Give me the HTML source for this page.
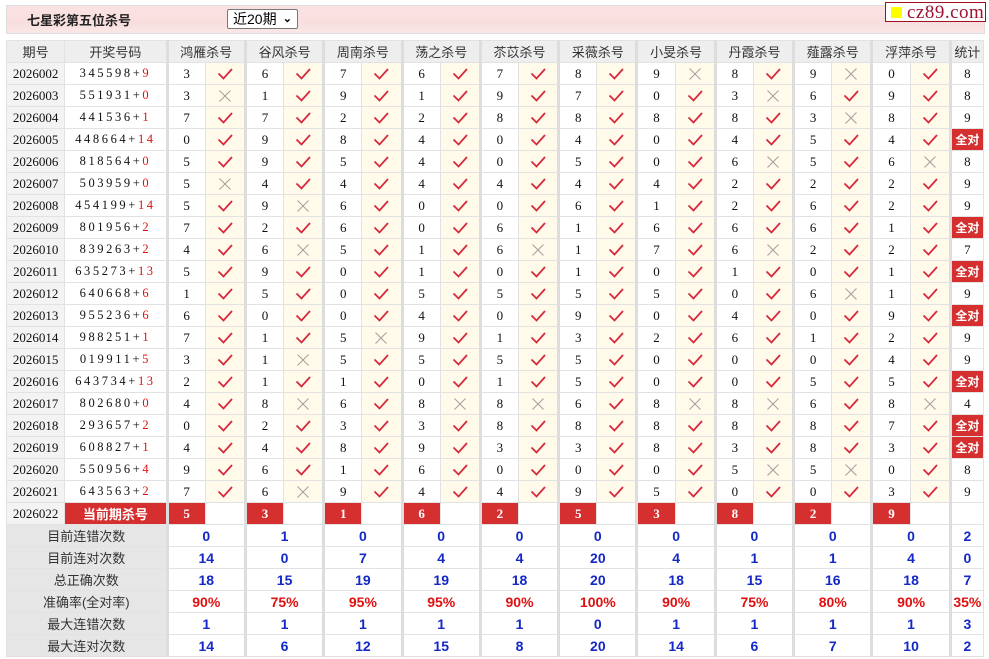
<!DOCTYPE html>
<html><head><meta charset="utf-8">
<style>
body{margin:0;background:#fff;width:989px;height:659px;overflow:hidden;position:relative;font-family:"Liberation Sans","Noto Sans CJK SC",sans-serif}
.top{position:absolute;left:6px;top:5px;width:977px;height:27px;border:1px solid #ddd;background:linear-gradient(#fbe3e3,#f9dede 60%,#fae6e6)}
.top b{position:absolute;left:20px;top:4px;font-size:13px;color:#222}
.sel{position:absolute;left:220px;top:3px;width:71px;height:20px;border:1px solid #777;background:#fff;font-size:14px;line-height:19px;padding-left:5px;box-sizing:border-box;border-radius:2px}
.sel span{position:absolute;right:5px;top:0;font-size:11px;font-weight:bold}
.logo{position:absolute;left:885px;top:2px;width:101px;height:20px;border:1px solid #a01020;background:#fff;font-family:"Liberation Serif",serif;font-size:19px;color:#a01030;line-height:20px;box-sizing:border-box;padding-left:21px;letter-spacing:.5px}
.logo i{position:absolute;left:5px;top:4px;width:11px;height:11px;background:#ffff00}
table{position:absolute;left:6px;top:40px;border-collapse:collapse;table-layout:fixed;width:978px}
td{border:1px solid #e2e2e2;height:21px;padding:0;text-align:center;font-family:"Liberation Serif","Noto Serif CJK SC",serif;font-size:13px;color:#111;overflow:hidden;white-space:nowrap}
tr.h td{background:#eee;font-family:"Liberation Sans","Noto Sans CJK SC",sans-serif;font-size:13px;color:#333}
td.p{background:#f3f3f3;font-size:13px}
td.n{letter-spacing:2.6px;font-size:12.5px}
td.n em{font-style:normal;color:#e01010}
td.g{border-left:3px solid #ddd}
td.c{background:#fffaea}
td.c svg{display:block;margin:0 auto}
td.r{background:#d52f30;color:#fff;font-weight:bold;font-family:"Liberation Sans","Noto Sans CJK SC",sans-serif}
td.rs{background:#d52f30;color:#fff;font-weight:bold}
td.a{background:#d52f30;color:#fff;font-weight:bold;font-family:"Liberation Sans","Noto Sans CJK SC",sans-serif;font-size:12px}
td.l{background:#e6e6e6;font-family:"Liberation Sans","Noto Sans CJK SC",sans-serif;color:#333}
tr.s td{font-family:"Liberation Sans",sans-serif;font-weight:bold;color:#1428c8;font-size:14px}
tr.s td.l{font-weight:normal;color:#333;font-size:13px;font-family:"Liberation Sans","Noto Sans CJK SC",sans-serif}
tr.s.pc td{color:#e01010}
tr.s.pc td.l{color:#333}
</style></head><body>
<svg width="0" height="0" style="position:absolute"><defs>
<symbol id="y" viewBox="0 0 18 14"><path d="M2.5 6.5 L7.5 11.5 L16 2" fill="none" stroke="#d8283c" stroke-width="1.8"/></symbol>
<symbol id="x" viewBox="0 0 18 14"><path d="M3.5 1.5 L14.5 12.5 M14.5 1.5 L3.5 12.5" fill="none" stroke="#a0a0a0" stroke-width="1"/></symbol>
</defs></svg>
<div class="top"><b>七星彩第五位杀号</b><div class="sel">近20期<span>&#8964;</span></div></div>
<div class="logo"><i></i>cz89.com</div>
<table>
<colgroup><col style="width:58px"><col style="width:102px">
<col style="width:38px"><col style="width:40px"><col style="width:38px"><col style="width:40px"><col style="width:38px"><col style="width:40px"><col style="width:38px"><col style="width:40px"><col style="width:38px"><col style="width:40px"><col style="width:38px"><col style="width:40px"><col style="width:38px"><col style="width:40px"><col style="width:38px"><col style="width:40px"><col style="width:38px"><col style="width:40px"><col style="width:38px"><col style="width:40px">
<col style="width:33px"></colgroup>
<tr class="h"><td>期号</td><td>开奖号码</td><td class="g" colspan="2">鸿雁杀号</td><td class="g" colspan="2">谷风杀号</td><td class="g" colspan="2">周南杀号</td><td class="g" colspan="2">荡之杀号</td><td class="g" colspan="2">苶苡杀号</td><td class="g" colspan="2">采薇杀号</td><td class="g" colspan="2">小旻杀号</td><td class="g" colspan="2">丹霞杀号</td><td class="g" colspan="2">薤露杀号</td><td class="g" colspan="2">浮萍杀号</td><td class="g">统计</td></tr>
<tr><td class="p">2026002</td><td class="n">345598+<em>9</em></td><td class="g">3</td><td class="c"><svg width="18" height="14"><use href="#y"/></svg></td><td class="g">6</td><td class="c"><svg width="18" height="14"><use href="#y"/></svg></td><td class="g">7</td><td class="c"><svg width="18" height="14"><use href="#y"/></svg></td><td class="g">6</td><td class="c"><svg width="18" height="14"><use href="#y"/></svg></td><td class="g">7</td><td class="c"><svg width="18" height="14"><use href="#y"/></svg></td><td class="g">8</td><td class="c"><svg width="18" height="14"><use href="#y"/></svg></td><td class="g">9</td><td class="c"><svg width="18" height="14"><use href="#x"/></svg></td><td class="g">8</td><td class="c"><svg width="18" height="14"><use href="#y"/></svg></td><td class="g">9</td><td class="c"><svg width="18" height="14"><use href="#x"/></svg></td><td class="g">0</td><td class="c"><svg width="18" height="14"><use href="#y"/></svg></td><td class="g">8</td></tr>
<tr><td class="p">2026003</td><td class="n">551931+<em>0</em></td><td class="g">3</td><td class="c"><svg width="18" height="14"><use href="#x"/></svg></td><td class="g">1</td><td class="c"><svg width="18" height="14"><use href="#y"/></svg></td><td class="g">9</td><td class="c"><svg width="18" height="14"><use href="#y"/></svg></td><td class="g">1</td><td class="c"><svg width="18" height="14"><use href="#y"/></svg></td><td class="g">9</td><td class="c"><svg width="18" height="14"><use href="#y"/></svg></td><td class="g">7</td><td class="c"><svg width="18" height="14"><use href="#y"/></svg></td><td class="g">0</td><td class="c"><svg width="18" height="14"><use href="#y"/></svg></td><td class="g">3</td><td class="c"><svg width="18" height="14"><use href="#x"/></svg></td><td class="g">6</td><td class="c"><svg width="18" height="14"><use href="#y"/></svg></td><td class="g">9</td><td class="c"><svg width="18" height="14"><use href="#y"/></svg></td><td class="g">8</td></tr>
<tr><td class="p">2026004</td><td class="n">441536+<em>1</em></td><td class="g">7</td><td class="c"><svg width="18" height="14"><use href="#y"/></svg></td><td class="g">7</td><td class="c"><svg width="18" height="14"><use href="#y"/></svg></td><td class="g">2</td><td class="c"><svg width="18" height="14"><use href="#y"/></svg></td><td class="g">2</td><td class="c"><svg width="18" height="14"><use href="#y"/></svg></td><td class="g">8</td><td class="c"><svg width="18" height="14"><use href="#y"/></svg></td><td class="g">8</td><td class="c"><svg width="18" height="14"><use href="#y"/></svg></td><td class="g">8</td><td class="c"><svg width="18" height="14"><use href="#y"/></svg></td><td class="g">8</td><td class="c"><svg width="18" height="14"><use href="#y"/></svg></td><td class="g">3</td><td class="c"><svg width="18" height="14"><use href="#x"/></svg></td><td class="g">8</td><td class="c"><svg width="18" height="14"><use href="#y"/></svg></td><td class="g">9</td></tr>
<tr><td class="p">2026005</td><td class="n">448664+<em>14</em></td><td class="g">0</td><td class="c"><svg width="18" height="14"><use href="#y"/></svg></td><td class="g">9</td><td class="c"><svg width="18" height="14"><use href="#y"/></svg></td><td class="g">8</td><td class="c"><svg width="18" height="14"><use href="#y"/></svg></td><td class="g">4</td><td class="c"><svg width="18" height="14"><use href="#y"/></svg></td><td class="g">0</td><td class="c"><svg width="18" height="14"><use href="#y"/></svg></td><td class="g">4</td><td class="c"><svg width="18" height="14"><use href="#y"/></svg></td><td class="g">0</td><td class="c"><svg width="18" height="14"><use href="#y"/></svg></td><td class="g">4</td><td class="c"><svg width="18" height="14"><use href="#y"/></svg></td><td class="g">5</td><td class="c"><svg width="18" height="14"><use href="#y"/></svg></td><td class="g">4</td><td class="c"><svg width="18" height="14"><use href="#y"/></svg></td><td class="g a">全对</td></tr>
<tr><td class="p">2026006</td><td class="n">818564+<em>0</em></td><td class="g">5</td><td class="c"><svg width="18" height="14"><use href="#y"/></svg></td><td class="g">9</td><td class="c"><svg width="18" height="14"><use href="#y"/></svg></td><td class="g">5</td><td class="c"><svg width="18" height="14"><use href="#y"/></svg></td><td class="g">4</td><td class="c"><svg width="18" height="14"><use href="#y"/></svg></td><td class="g">0</td><td class="c"><svg width="18" height="14"><use href="#y"/></svg></td><td class="g">5</td><td class="c"><svg width="18" height="14"><use href="#y"/></svg></td><td class="g">0</td><td class="c"><svg width="18" height="14"><use href="#y"/></svg></td><td class="g">6</td><td class="c"><svg width="18" height="14"><use href="#x"/></svg></td><td class="g">5</td><td class="c"><svg width="18" height="14"><use href="#y"/></svg></td><td class="g">6</td><td class="c"><svg width="18" height="14"><use href="#x"/></svg></td><td class="g">8</td></tr>
<tr><td class="p">2026007</td><td class="n">503959+<em>0</em></td><td class="g">5</td><td class="c"><svg width="18" height="14"><use href="#x"/></svg></td><td class="g">4</td><td class="c"><svg width="18" height="14"><use href="#y"/></svg></td><td class="g">4</td><td class="c"><svg width="18" height="14"><use href="#y"/></svg></td><td class="g">4</td><td class="c"><svg width="18" height="14"><use href="#y"/></svg></td><td class="g">4</td><td class="c"><svg width="18" height="14"><use href="#y"/></svg></td><td class="g">4</td><td class="c"><svg width="18" height="14"><use href="#y"/></svg></td><td class="g">4</td><td class="c"><svg width="18" height="14"><use href="#y"/></svg></td><td class="g">2</td><td class="c"><svg width="18" height="14"><use href="#y"/></svg></td><td class="g">2</td><td class="c"><svg width="18" height="14"><use href="#y"/></svg></td><td class="g">2</td><td class="c"><svg width="18" height="14"><use href="#y"/></svg></td><td class="g">9</td></tr>
<tr><td class="p">2026008</td><td class="n">454199+<em>14</em></td><td class="g">5</td><td class="c"><svg width="18" height="14"><use href="#y"/></svg></td><td class="g">9</td><td class="c"><svg width="18" height="14"><use href="#x"/></svg></td><td class="g">6</td><td class="c"><svg width="18" height="14"><use href="#y"/></svg></td><td class="g">0</td><td class="c"><svg width="18" height="14"><use href="#y"/></svg></td><td class="g">0</td><td class="c"><svg width="18" height="14"><use href="#y"/></svg></td><td class="g">6</td><td class="c"><svg width="18" height="14"><use href="#y"/></svg></td><td class="g">1</td><td class="c"><svg width="18" height="14"><use href="#y"/></svg></td><td class="g">2</td><td class="c"><svg width="18" height="14"><use href="#y"/></svg></td><td class="g">6</td><td class="c"><svg width="18" height="14"><use href="#y"/></svg></td><td class="g">2</td><td class="c"><svg width="18" height="14"><use href="#y"/></svg></td><td class="g">9</td></tr>
<tr><td class="p">2026009</td><td class="n">801956+<em>2</em></td><td class="g">7</td><td class="c"><svg width="18" height="14"><use href="#y"/></svg></td><td class="g">2</td><td class="c"><svg width="18" height="14"><use href="#y"/></svg></td><td class="g">6</td><td class="c"><svg width="18" height="14"><use href="#y"/></svg></td><td class="g">0</td><td class="c"><svg width="18" height="14"><use href="#y"/></svg></td><td class="g">6</td><td class="c"><svg width="18" height="14"><use href="#y"/></svg></td><td class="g">1</td><td class="c"><svg width="18" height="14"><use href="#y"/></svg></td><td class="g">6</td><td class="c"><svg width="18" height="14"><use href="#y"/></svg></td><td class="g">6</td><td class="c"><svg width="18" height="14"><use href="#y"/></svg></td><td class="g">6</td><td class="c"><svg width="18" height="14"><use href="#y"/></svg></td><td class="g">1</td><td class="c"><svg width="18" height="14"><use href="#y"/></svg></td><td class="g a">全对</td></tr>
<tr><td class="p">2026010</td><td class="n">839263+<em>2</em></td><td class="g">4</td><td class="c"><svg width="18" height="14"><use href="#y"/></svg></td><td class="g">6</td><td class="c"><svg width="18" height="14"><use href="#x"/></svg></td><td class="g">5</td><td class="c"><svg width="18" height="14"><use href="#y"/></svg></td><td class="g">1</td><td class="c"><svg width="18" height="14"><use href="#y"/></svg></td><td class="g">6</td><td class="c"><svg width="18" height="14"><use href="#x"/></svg></td><td class="g">1</td><td class="c"><svg width="18" height="14"><use href="#y"/></svg></td><td class="g">7</td><td class="c"><svg width="18" height="14"><use href="#y"/></svg></td><td class="g">6</td><td class="c"><svg width="18" height="14"><use href="#x"/></svg></td><td class="g">2</td><td class="c"><svg width="18" height="14"><use href="#y"/></svg></td><td class="g">2</td><td class="c"><svg width="18" height="14"><use href="#y"/></svg></td><td class="g">7</td></tr>
<tr><td class="p">2026011</td><td class="n">635273+<em>13</em></td><td class="g">5</td><td class="c"><svg width="18" height="14"><use href="#y"/></svg></td><td class="g">9</td><td class="c"><svg width="18" height="14"><use href="#y"/></svg></td><td class="g">0</td><td class="c"><svg width="18" height="14"><use href="#y"/></svg></td><td class="g">1</td><td class="c"><svg width="18" height="14"><use href="#y"/></svg></td><td class="g">0</td><td class="c"><svg width="18" height="14"><use href="#y"/></svg></td><td class="g">1</td><td class="c"><svg width="18" height="14"><use href="#y"/></svg></td><td class="g">0</td><td class="c"><svg width="18" height="14"><use href="#y"/></svg></td><td class="g">1</td><td class="c"><svg width="18" height="14"><use href="#y"/></svg></td><td class="g">0</td><td class="c"><svg width="18" height="14"><use href="#y"/></svg></td><td class="g">1</td><td class="c"><svg width="18" height="14"><use href="#y"/></svg></td><td class="g a">全对</td></tr>
<tr><td class="p">2026012</td><td class="n">640668+<em>6</em></td><td class="g">1</td><td class="c"><svg width="18" height="14"><use href="#y"/></svg></td><td class="g">5</td><td class="c"><svg width="18" height="14"><use href="#y"/></svg></td><td class="g">0</td><td class="c"><svg width="18" height="14"><use href="#y"/></svg></td><td class="g">5</td><td class="c"><svg width="18" height="14"><use href="#y"/></svg></td><td class="g">5</td><td class="c"><svg width="18" height="14"><use href="#y"/></svg></td><td class="g">5</td><td class="c"><svg width="18" height="14"><use href="#y"/></svg></td><td class="g">5</td><td class="c"><svg width="18" height="14"><use href="#y"/></svg></td><td class="g">0</td><td class="c"><svg width="18" height="14"><use href="#y"/></svg></td><td class="g">6</td><td class="c"><svg width="18" height="14"><use href="#x"/></svg></td><td class="g">1</td><td class="c"><svg width="18" height="14"><use href="#y"/></svg></td><td class="g">9</td></tr>
<tr><td class="p">2026013</td><td class="n">955236+<em>6</em></td><td class="g">6</td><td class="c"><svg width="18" height="14"><use href="#y"/></svg></td><td class="g">0</td><td class="c"><svg width="18" height="14"><use href="#y"/></svg></td><td class="g">0</td><td class="c"><svg width="18" height="14"><use href="#y"/></svg></td><td class="g">4</td><td class="c"><svg width="18" height="14"><use href="#y"/></svg></td><td class="g">0</td><td class="c"><svg width="18" height="14"><use href="#y"/></svg></td><td class="g">9</td><td class="c"><svg width="18" height="14"><use href="#y"/></svg></td><td class="g">0</td><td class="c"><svg width="18" height="14"><use href="#y"/></svg></td><td class="g">4</td><td class="c"><svg width="18" height="14"><use href="#y"/></svg></td><td class="g">0</td><td class="c"><svg width="18" height="14"><use href="#y"/></svg></td><td class="g">9</td><td class="c"><svg width="18" height="14"><use href="#y"/></svg></td><td class="g a">全对</td></tr>
<tr><td class="p">2026014</td><td class="n">988251+<em>1</em></td><td class="g">7</td><td class="c"><svg width="18" height="14"><use href="#y"/></svg></td><td class="g">1</td><td class="c"><svg width="18" height="14"><use href="#y"/></svg></td><td class="g">5</td><td class="c"><svg width="18" height="14"><use href="#x"/></svg></td><td class="g">9</td><td class="c"><svg width="18" height="14"><use href="#y"/></svg></td><td class="g">1</td><td class="c"><svg width="18" height="14"><use href="#y"/></svg></td><td class="g">3</td><td class="c"><svg width="18" height="14"><use href="#y"/></svg></td><td class="g">2</td><td class="c"><svg width="18" height="14"><use href="#y"/></svg></td><td class="g">6</td><td class="c"><svg width="18" height="14"><use href="#y"/></svg></td><td class="g">1</td><td class="c"><svg width="18" height="14"><use href="#y"/></svg></td><td class="g">2</td><td class="c"><svg width="18" height="14"><use href="#y"/></svg></td><td class="g">9</td></tr>
<tr><td class="p">2026015</td><td class="n">019911+<em>5</em></td><td class="g">3</td><td class="c"><svg width="18" height="14"><use href="#y"/></svg></td><td class="g">1</td><td class="c"><svg width="18" height="14"><use href="#x"/></svg></td><td class="g">5</td><td class="c"><svg width="18" height="14"><use href="#y"/></svg></td><td class="g">5</td><td class="c"><svg width="18" height="14"><use href="#y"/></svg></td><td class="g">5</td><td class="c"><svg width="18" height="14"><use href="#y"/></svg></td><td class="g">5</td><td class="c"><svg width="18" height="14"><use href="#y"/></svg></td><td class="g">0</td><td class="c"><svg width="18" height="14"><use href="#y"/></svg></td><td class="g">0</td><td class="c"><svg width="18" height="14"><use href="#y"/></svg></td><td class="g">0</td><td class="c"><svg width="18" height="14"><use href="#y"/></svg></td><td class="g">4</td><td class="c"><svg width="18" height="14"><use href="#y"/></svg></td><td class="g">9</td></tr>
<tr><td class="p">2026016</td><td class="n">643734+<em>13</em></td><td class="g">2</td><td class="c"><svg width="18" height="14"><use href="#y"/></svg></td><td class="g">1</td><td class="c"><svg width="18" height="14"><use href="#y"/></svg></td><td class="g">1</td><td class="c"><svg width="18" height="14"><use href="#y"/></svg></td><td class="g">0</td><td class="c"><svg width="18" height="14"><use href="#y"/></svg></td><td class="g">1</td><td class="c"><svg width="18" height="14"><use href="#y"/></svg></td><td class="g">5</td><td class="c"><svg width="18" height="14"><use href="#y"/></svg></td><td class="g">0</td><td class="c"><svg width="18" height="14"><use href="#y"/></svg></td><td class="g">0</td><td class="c"><svg width="18" height="14"><use href="#y"/></svg></td><td class="g">5</td><td class="c"><svg width="18" height="14"><use href="#y"/></svg></td><td class="g">5</td><td class="c"><svg width="18" height="14"><use href="#y"/></svg></td><td class="g a">全对</td></tr>
<tr><td class="p">2026017</td><td class="n">802680+<em>0</em></td><td class="g">4</td><td class="c"><svg width="18" height="14"><use href="#y"/></svg></td><td class="g">8</td><td class="c"><svg width="18" height="14"><use href="#x"/></svg></td><td class="g">6</td><td class="c"><svg width="18" height="14"><use href="#y"/></svg></td><td class="g">8</td><td class="c"><svg width="18" height="14"><use href="#x"/></svg></td><td class="g">8</td><td class="c"><svg width="18" height="14"><use href="#x"/></svg></td><td class="g">6</td><td class="c"><svg width="18" height="14"><use href="#y"/></svg></td><td class="g">8</td><td class="c"><svg width="18" height="14"><use href="#x"/></svg></td><td class="g">8</td><td class="c"><svg width="18" height="14"><use href="#x"/></svg></td><td class="g">6</td><td class="c"><svg width="18" height="14"><use href="#y"/></svg></td><td class="g">8</td><td class="c"><svg width="18" height="14"><use href="#x"/></svg></td><td class="g">4</td></tr>
<tr><td class="p">2026018</td><td class="n">293657+<em>2</em></td><td class="g">0</td><td class="c"><svg width="18" height="14"><use href="#y"/></svg></td><td class="g">2</td><td class="c"><svg width="18" height="14"><use href="#y"/></svg></td><td class="g">3</td><td class="c"><svg width="18" height="14"><use href="#y"/></svg></td><td class="g">3</td><td class="c"><svg width="18" height="14"><use href="#y"/></svg></td><td class="g">8</td><td class="c"><svg width="18" height="14"><use href="#y"/></svg></td><td class="g">8</td><td class="c"><svg width="18" height="14"><use href="#y"/></svg></td><td class="g">8</td><td class="c"><svg width="18" height="14"><use href="#y"/></svg></td><td class="g">8</td><td class="c"><svg width="18" height="14"><use href="#y"/></svg></td><td class="g">8</td><td class="c"><svg width="18" height="14"><use href="#y"/></svg></td><td class="g">7</td><td class="c"><svg width="18" height="14"><use href="#y"/></svg></td><td class="g a">全对</td></tr>
<tr><td class="p">2026019</td><td class="n">608827+<em>1</em></td><td class="g">4</td><td class="c"><svg width="18" height="14"><use href="#y"/></svg></td><td class="g">4</td><td class="c"><svg width="18" height="14"><use href="#y"/></svg></td><td class="g">8</td><td class="c"><svg width="18" height="14"><use href="#y"/></svg></td><td class="g">9</td><td class="c"><svg width="18" height="14"><use href="#y"/></svg></td><td class="g">3</td><td class="c"><svg width="18" height="14"><use href="#y"/></svg></td><td class="g">3</td><td class="c"><svg width="18" height="14"><use href="#y"/></svg></td><td class="g">8</td><td class="c"><svg width="18" height="14"><use href="#y"/></svg></td><td class="g">3</td><td class="c"><svg width="18" height="14"><use href="#y"/></svg></td><td class="g">8</td><td class="c"><svg width="18" height="14"><use href="#y"/></svg></td><td class="g">3</td><td class="c"><svg width="18" height="14"><use href="#y"/></svg></td><td class="g a">全对</td></tr>
<tr><td class="p">2026020</td><td class="n">550956+<em>4</em></td><td class="g">9</td><td class="c"><svg width="18" height="14"><use href="#y"/></svg></td><td class="g">6</td><td class="c"><svg width="18" height="14"><use href="#y"/></svg></td><td class="g">1</td><td class="c"><svg width="18" height="14"><use href="#y"/></svg></td><td class="g">6</td><td class="c"><svg width="18" height="14"><use href="#y"/></svg></td><td class="g">0</td><td class="c"><svg width="18" height="14"><use href="#y"/></svg></td><td class="g">0</td><td class="c"><svg width="18" height="14"><use href="#y"/></svg></td><td class="g">0</td><td class="c"><svg width="18" height="14"><use href="#y"/></svg></td><td class="g">5</td><td class="c"><svg width="18" height="14"><use href="#x"/></svg></td><td class="g">5</td><td class="c"><svg width="18" height="14"><use href="#x"/></svg></td><td class="g">0</td><td class="c"><svg width="18" height="14"><use href="#y"/></svg></td><td class="g">8</td></tr>
<tr><td class="p">2026021</td><td class="n">643563+<em>2</em></td><td class="g">7</td><td class="c"><svg width="18" height="14"><use href="#y"/></svg></td><td class="g">6</td><td class="c"><svg width="18" height="14"><use href="#x"/></svg></td><td class="g">9</td><td class="c"><svg width="18" height="14"><use href="#y"/></svg></td><td class="g">4</td><td class="c"><svg width="18" height="14"><use href="#y"/></svg></td><td class="g">4</td><td class="c"><svg width="18" height="14"><use href="#y"/></svg></td><td class="g">9</td><td class="c"><svg width="18" height="14"><use href="#y"/></svg></td><td class="g">5</td><td class="c"><svg width="18" height="14"><use href="#y"/></svg></td><td class="g">0</td><td class="c"><svg width="18" height="14"><use href="#y"/></svg></td><td class="g">0</td><td class="c"><svg width="18" height="14"><use href="#y"/></svg></td><td class="g">3</td><td class="c"><svg width="18" height="14"><use href="#y"/></svg></td><td class="g">9</td></tr>
<tr><td class="p">2026022</td><td class="r">当前期杀号</td><td class="g rs">5</td><td></td><td class="g rs">3</td><td></td><td class="g rs">1</td><td></td><td class="g rs">6</td><td></td><td class="g rs">2</td><td></td><td class="g rs">5</td><td></td><td class="g rs">3</td><td></td><td class="g rs">8</td><td></td><td class="g rs">2</td><td></td><td class="g rs">9</td><td></td><td class="g"></td></tr>
<tr class="s"><td class="l" colspan="2">目前连错次数</td><td class="g" colspan="2">0</td><td class="g" colspan="2">1</td><td class="g" colspan="2">0</td><td class="g" colspan="2">0</td><td class="g" colspan="2">0</td><td class="g" colspan="2">0</td><td class="g" colspan="2">0</td><td class="g" colspan="2">0</td><td class="g" colspan="2">0</td><td class="g" colspan="2">0</td><td class="g">2</td></tr>
<tr class="s"><td class="l" colspan="2">目前连对次数</td><td class="g" colspan="2">14</td><td class="g" colspan="2">0</td><td class="g" colspan="2">7</td><td class="g" colspan="2">4</td><td class="g" colspan="2">4</td><td class="g" colspan="2">20</td><td class="g" colspan="2">4</td><td class="g" colspan="2">1</td><td class="g" colspan="2">1</td><td class="g" colspan="2">4</td><td class="g">0</td></tr>
<tr class="s"><td class="l" colspan="2">总正确次数</td><td class="g" colspan="2">18</td><td class="g" colspan="2">15</td><td class="g" colspan="2">19</td><td class="g" colspan="2">19</td><td class="g" colspan="2">18</td><td class="g" colspan="2">20</td><td class="g" colspan="2">18</td><td class="g" colspan="2">15</td><td class="g" colspan="2">16</td><td class="g" colspan="2">18</td><td class="g">7</td></tr>
<tr class="s pc"><td class="l" colspan="2">准确率(全对率)</td><td class="g" colspan="2">90%</td><td class="g" colspan="2">75%</td><td class="g" colspan="2">95%</td><td class="g" colspan="2">95%</td><td class="g" colspan="2">90%</td><td class="g" colspan="2">100%</td><td class="g" colspan="2">90%</td><td class="g" colspan="2">75%</td><td class="g" colspan="2">80%</td><td class="g" colspan="2">90%</td><td class="g">35%</td></tr>
<tr class="s"><td class="l" colspan="2">最大连错次数</td><td class="g" colspan="2">1</td><td class="g" colspan="2">1</td><td class="g" colspan="2">1</td><td class="g" colspan="2">1</td><td class="g" colspan="2">1</td><td class="g" colspan="2">0</td><td class="g" colspan="2">1</td><td class="g" colspan="2">1</td><td class="g" colspan="2">1</td><td class="g" colspan="2">1</td><td class="g">3</td></tr>
<tr class="s"><td class="l" colspan="2">最大连对次数</td><td class="g" colspan="2">14</td><td class="g" colspan="2">6</td><td class="g" colspan="2">12</td><td class="g" colspan="2">15</td><td class="g" colspan="2">8</td><td class="g" colspan="2">20</td><td class="g" colspan="2">14</td><td class="g" colspan="2">6</td><td class="g" colspan="2">7</td><td class="g" colspan="2">10</td><td class="g">2</td></tr>
</table>
</body></html>
